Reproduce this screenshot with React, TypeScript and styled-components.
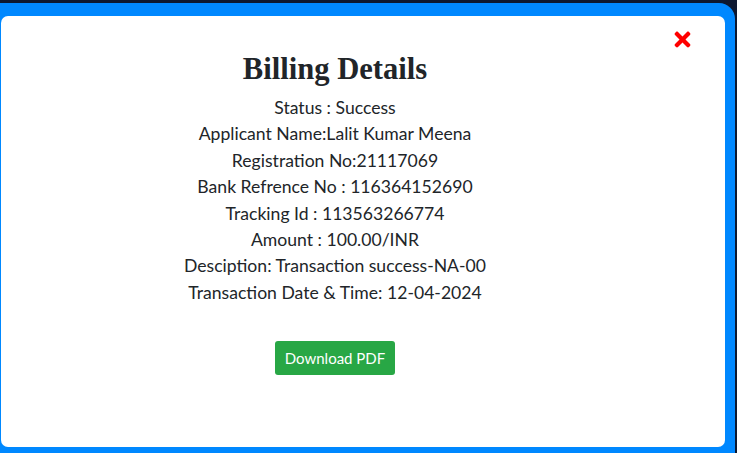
import React from "react";
import styled, { createGlobalStyle } from "styled-components";
import { FaTimes } from "react-icons/fa";

const Global = createGlobalStyle`
  html, body { margin: 0; padding: 0; background: #0d1830; overflow: hidden; }
  body { width: 737px; height: 453px; }
`;

const Backdrop = styled.div`
  width: 737px;
  height: 453px;
  padding-top: 3px;
  box-sizing: border-box;
  overflow: hidden;
`;

const Frame = styled.div`
  margin-left: -12px;
  width: 747px;
  height: 470px;
  background: #0088ff;
  border-radius: 0 16px 16px 0;
  padding: 13px 12px 0 13px;
  box-sizing: border-box;
`;

const Card = styled.div`
  position: relative;
  width: 724px;
  height: 431px;
  background: #ffffff;
  border-radius: 7px;
  display: flex;
  flex-direction: column;
  align-items: center;
  padding: 35px 56px 0 0;
  box-sizing: border-box;
`;

const Close = styled.button`
  position: absolute;
  top: 12px;
  right: 31px;
  border: none;
  background: none;
  padding: 0;
  color: #ff0000;
  font-size: 23px;
  line-height: 0;
  cursor: pointer;
`;

const Title = styled.h2`
  margin: 0 0 8px;
  font-family: "Liberation Serif", "Times New Roman", serif;
  font-weight: 700;
  font-size: 30.6px;
  line-height: 36px;
  color: #212529;
`;

const Info = styled.div`
  font-family: Lato, "Open Sans", sans-serif;
  font-size: 17.6px;
  line-height: 26.4px;
  color: #212529;
  text-align: center;
`;

const Line = styled.div``;

const Button = styled.button`
  margin-top: 35px;
  background: #28a745;
  color: #ffffff;
  border: none;
  border-radius: 3px;
  height: 34px;
  padding: 0 10px;
  font-family: Lato, "Open Sans", sans-serif;
  font-size: 15px;
  cursor: pointer;
`;

const lines = [
  "Status : Success",
  "Applicant Name:Lalit Kumar Meena",
  "Registration No:21117069",
  "Bank Refrence No : 116364152690",
  "Tracking Id : 113563266774",
  "Amount : 100.00/INR",
  "Desciption: Transaction success-NA-00",
  "Transaction Date & Time: 12-04-2024",
];

export default function App() {
  return (
    <>
      <Global />
      <Backdrop>
        <Frame>
          <Card>
            <Close aria-label="Close">
              <FaTimes />
            </Close>
            <Title>Billing Details</Title>
            <Info>
              {lines.map((l) => (
                <Line key={l}>{l}</Line>
              ))}
            </Info>
            <Button>Download PDF</Button>
          </Card>
        </Frame>
      </Backdrop>
    </>
  );
}
